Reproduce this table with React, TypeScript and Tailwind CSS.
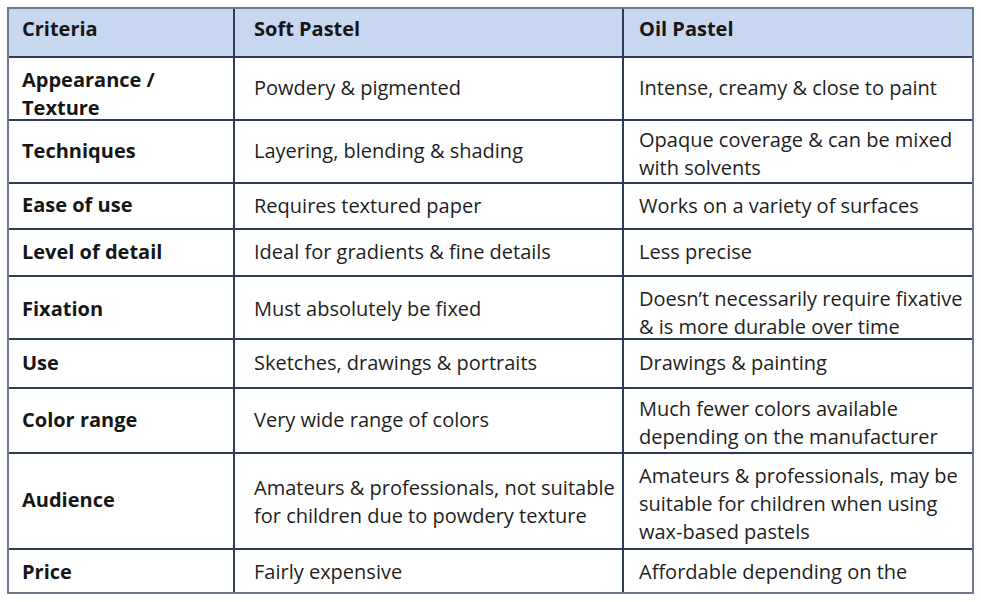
type Row = { label: string; soft: string; oil: string; h: string; lp?: string; sp?: string; op?: string };

const rows: Row[] = [
    { label: "Appearance / Texture", soft: "Powdery & pigmented", oil: "Intense, creamy & close to paint", h: "h-[63px]", lp: "pt-[10px]" },
    { label: "Techniques", soft: "Layering, blending & shading", oil: "Opaque coverage & can be mixed with solvents", h: "h-[63px]", op: "pt-[5px]" },
    { label: "Ease of use", soft: "Requires textured paper", oil: "Works on a variety of surfaces", h: "h-[46px]" },
    { label: "Level of detail", soft: "Ideal for gradients & fine details", oil: "Less precise", h: "h-[47px]" },
    { label: "Fixation", soft: "Must absolutely be fixed", oil: "Doesn\u2019t necessarily require fixative & is more durable over time", h: "h-[63px]", lp: "pt-[2px]", sp: "pt-[2px]", op: "pt-[10px]" },
    { label: "Use", soft: "Sketches, drawings & portraits", oil: "Drawings & painting", h: "h-[49px]" },
    { label: "Color range", soft: "Very wide range of colors", oil: "Much fewer colors available depending on the manufacturer", h: "h-[65px]", op: "pt-[5px]" },
    { label: "Audience", soft: "Amateurs & professionals, not suitable for children due to powdery texture", oil: "Amateurs & professionals, may be suitable for children when using wax-based pastels", h: "h-[96px]", sp: "pt-[2px]", op: "pt-[6px]" },
];

export default function App() {
    return (
        <div className="w-[981px] h-[602px] bg-white text-[20px] leading-[28px] text-[#1e1e1e]" style={{ fontFamily: '"Open Sans", "Noto Sans", sans-serif' }}>
            <div className="ml-[7px] pt-[7px]">
                <div className="w-[967px] h-[587px] border-2 border-[#6f7893] overflow-hidden flex flex-col">

                    {/* ── Header ── */}
                    <div className="flex h-[49px] shrink-0 bg-[#c7d8f0] border-b-2 border-[#2d3a5a] font-bold text-[#161616]">
                        <div className="w-[226px] shrink-0 border-r-2 border-[#2d3a5a] pl-[13px] pt-[6px]">Criteria</div>
                        <div className="w-[389px] shrink-0 border-r-2 border-[#2d3a5a] pl-[19px] pt-[6px]">Soft Pastel</div>
                        <div className="flex-1 pl-[15px] pt-[6px]">Oil Pastel</div>
                    </div>

                    {/* ── Body rows ── */}
                    {rows.map((r) => (
                        <div key={r.label} className={`flex ${r.h} shrink-0 border-b-2 border-[#2d3a5a]`}>
                            <div className={`w-[226px] shrink-0 border-r-2 border-[#2d3a5a] pl-[13px] pr-[40px] flex items-center font-bold text-[#161616] ${r.lp ?? "pb-[2px]"}`}>
                                {r.label}
                            </div>
                            <div className={`w-[389px] shrink-0 border-r-2 border-[#2d3a5a] pl-[19px] pr-[4px] flex items-center ${r.sp ?? "pb-[1px]"}`}>
                                {r.soft}
                            </div>
                            <div className={`flex-1 pl-[15px] pr-[5px] flex items-center ${r.op ?? "pb-[1px]"}`}>
                                {r.oil}
                            </div>
                        </div>
                    ))}

                    {/* ── Last row, clipped ── */}
                    <div className="flex h-[80px] shrink-0">
                        <div className="w-[226px] shrink-0 border-r-2 border-[#2d3a5a] pl-[13px] pt-[8px] font-bold text-[#161616]">Price</div>
                        <div className="w-[389px] shrink-0 border-r-2 border-[#2d3a5a] pl-[19px] pt-[8px]">Fairly expensive</div>
                        <div className="flex-1 pl-[15px] pr-[5px] pt-[8px]">Affordable depending on the brand</div>
                    </div>
                </div>
            </div>
        </div>
    );
}
